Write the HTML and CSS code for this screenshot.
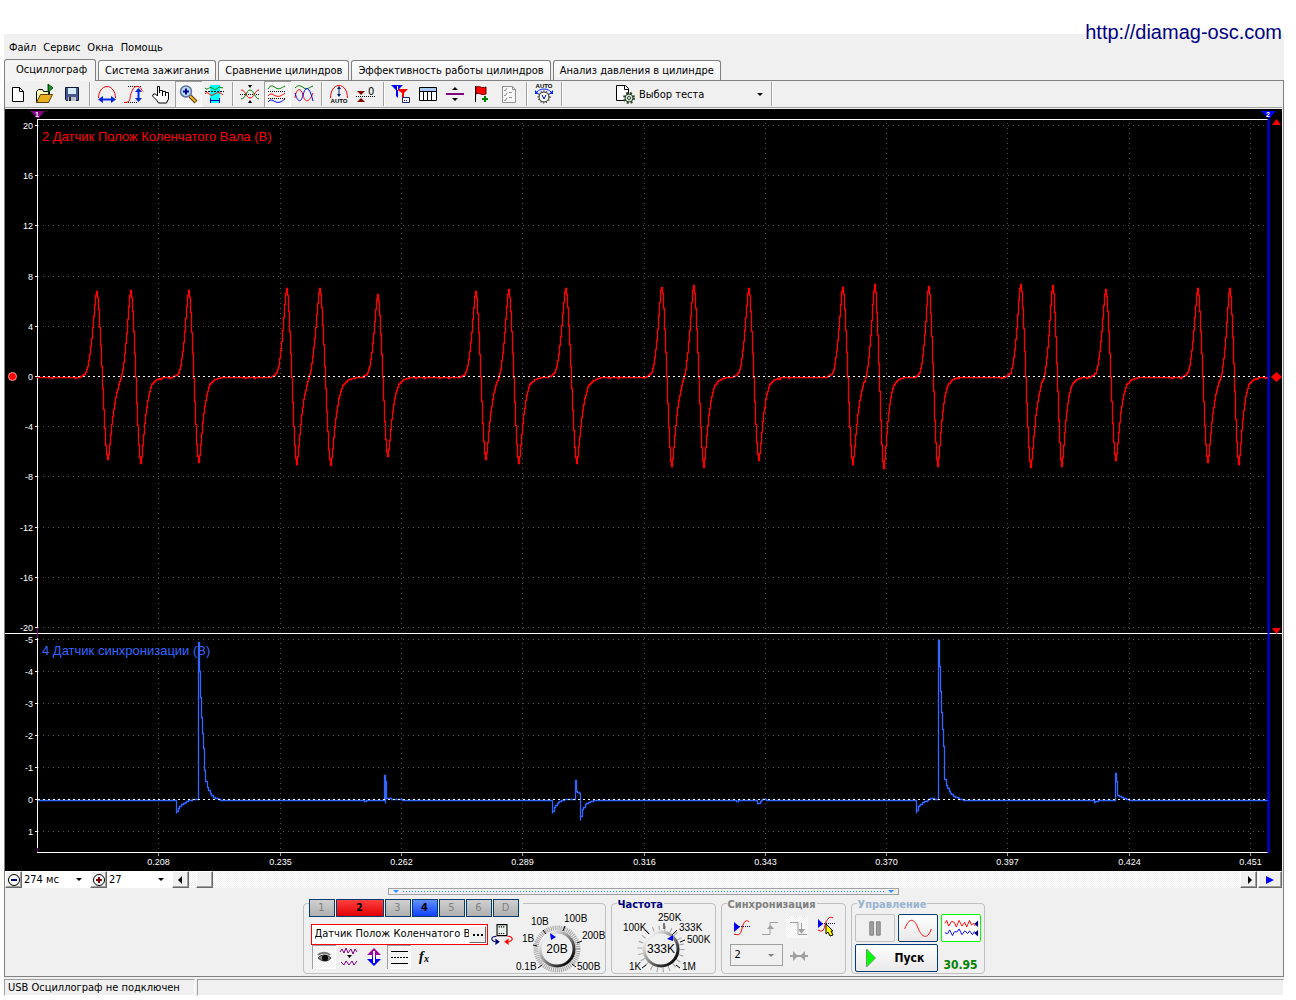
FILE: index.html
```html
<!DOCTYPE html>
<html lang="ru">
<head>
<meta charset="utf-8">
<title>Осциллограф</title>
<link rel="stylesheet" href="styles.css">
</head>
<body>
<header class="site"><a href="http://diamag-osc.com">http://diamag-osc.com</a></header>
<main class="app">
  <nav class="menu">
    <button>Файл</button><button>Сервис</button><button>Окна</button><button>Помощь</button>
  </nav>
  <div class="tabs" role="tablist">
    <button class="tab active" role="tab" aria-selected="true">Осциллограф</button>
    <button class="tab" role="tab">Система зажигания</button>
    <button class="tab" role="tab">Сравнение цилиндров</button>
    <button class="tab" role="tab">Эффективность работы цилиндров</button>
    <button class="tab" role="tab">Анализ давления в цилиндре</button>
  </div>
  <section class="sheet">
    <div class="toolbar">
      <button class="tool" aria-label="Новый"><svg viewBox="0 0 22 22"><path d="M5.500 4.500h7l4 4v10h-11z" fill="#fff" stroke="#000"/><path d="M12.500 4.500v4h4" fill="none" stroke="#000"/></svg></button>
      <button class="tool" aria-label="Открыть"><svg viewBox="0 0 22 22"><path d="M2.500 19.500v-11l2-2h4l1 2h6v3" fill="#ffffc0" stroke="#000"/><path d="M2.500 19.500l4-8h12l-4 8z" fill="#e8b020" stroke="#604000"/><path d="M14 1l5 4-5 4z" fill="#00a020" stroke="#006010"/><path d="M14.500 2v10" stroke="#004000"/></svg></button>
      <button class="tool" aria-label="Сохранить"><svg viewBox="0 0 22 22"><path d="M4.500 4.500h13v13h-12l-1-1z" fill="#485890" stroke="#101830"/><path d="M7 5h8v6H7z" fill="#d8ecff"/><path d="M7 14h8v4H7z" fill="#c0c0c8"/><path d="M8 14h2v4H8z" fill="#202840"/></svg></button>
      <i class="sep"></i>
      <button class="tool" aria-label="По горизонтали"><svg viewBox="0 0 22 22"><path d="M2.500 15C2.500 9 6 3.500 11 3.500S19.500 9 19.500 15" fill="none" stroke="#f00"/><path d="M4 16.500h14" stroke="#0028ff" stroke-width="2"/><path d="M7 13v7l-5-3.500zM15 13v7l5-3.500z" fill="#0028d0"/></svg></button>
      <button class="tool" aria-label="По вертикали"><svg viewBox="0 0 22 22"><path d="M5 3.500h14M3 19.500h12" stroke="#000" stroke-dasharray="1 1"/><path d="M1 19.500c8 0 5-4 7-9s3-7 6-7c4 0 4 3 6 5" fill="none" stroke="#f00"/><path d="M15.500 6v11" stroke="#0028ff" stroke-width="2"/><path d="M12 9h7l-3.500-4zM12 15h7l-3.500 4z" fill="#0028d0"/></svg></button>
      <button class="tool" aria-label="Рука"><svg viewBox="0 0 22 22"><path d="M7.500 13V3.500h2V10V7.500h3V10V8.500h3V11V9.500h3V16l-2 4h-8l-2-3-4-4 1-2h2z" fill="#fff" stroke="#000"/><path d="M12.500 9v4M15.500 10v3" stroke="#000"/></svg></button>
      <button class="tool on" aria-label="Увеличить"><svg viewBox="0 0 22 22"><path d="M13 13l6 6" stroke="#604010" stroke-width="4"/><path d="M13 13l5.500 5.500" stroke="#f0b020" stroke-width="2"/><circle cx="9" cy="8.500" r="5.500" fill="#b8e0ff" stroke="#6070a0" stroke-width="1.500"/><path d="M6 8.500h6M9 5.500v6" stroke="#0000a0" stroke-width="2"/></svg></button>
      <button class="tool" aria-label="Выделение"><svg viewBox="0 0 22 22"><path d="M6 2h10v18H6z" fill="#0ff"/><path d="M1 5c3 3 4-2 7 0s4 2 7-1l4 1" fill="none" stroke="#008000"/><path d="M1 8.500h19" stroke="#000" stroke-dasharray="2 1"/><path d="M1 11c3-4 5 3 8 1s6-4 10 0" fill="none" stroke="#f00"/><path d="M7 17.500h8" stroke="#0000c0"/><path d="M6.500 15v5M15.500 15v5" stroke="#0000c0"/></svg></button>
      <i class="sep"></i>
      <button class="tool" aria-label="Центр"><svg viewBox="0 0 22 22"><path d="M1 11.500h20" stroke="#000" stroke-dasharray="1 1"/><path d="M2 7c5 0 5 8 9 8s5-8 9-8" fill="none" stroke="#f00"/><path d="M2 16c5 0 5-9 9-9s5 9 9 9" fill="none" stroke="#008000"/><path d="M9 2h4l-2 3zM9 20h4l-2-3z"/></svg></button>
      <button class="tool on" aria-label="Раздельно"><svg viewBox="0 0 22 22"><path d="M2 6c3-5 5-3 8-1s5 0 9-2" fill="none" stroke="#008000"/><path d="M2 13c3-4 5-1 8 0s5 0 9-3" fill="none" stroke="#f00"/><path d="M2 19c3-4 5-1 8 0s5 0 9-3" fill="none" stroke="#00f"/><path d="M2 8.500h18M2 15.500h18" stroke="#000" stroke-dasharray="1 1"/></svg></button>
      <button class="tool" aria-label="Вместе"><svg viewBox="0 0 22 22"><path d="M2 5c4-4 6-2 9 0s6-1 9-2" fill="none" stroke="#008000"/><path d="M2 15C3 5 8 4 10 12s6 8 10-2" fill="none" stroke="#f00"/><path d="M2 10c3 10 6 10 8 2s6-11 10 6" fill="none" stroke="#00f"/></svg></button>
      <i class="sep"></i>
      <button class="tool" aria-label="Авто размах"><svg viewBox="0 0 22 22"><path d="M2.500 15C2.500 8 6 2.500 11 2.500S19.500 8 19.500 15" fill="none" stroke="#f00"/><path d="M11 4v9" stroke="#002080"/><path d="M9 6h4l-2-3zM9 11h4l-2 3z" fill="#002080"/><text x="11" y="20" text-anchor="middle" class="tiny">AUTO</text></svg></button>
      <button class="tool" aria-label="Ноль"><svg viewBox="0 0 22 22"><path d="M1 13.500h20" stroke="#000" stroke-dasharray="1 1"/><path d="M2 8h8l-4 4zM2 19h8l-4-4z" fill="#800000"/><text x="13" y="12" class="zero">0</text></svg></button>
      <i class="sep"></i>
      <button class="tool" aria-label="Фильтр"><svg viewBox="0 0 22 22"><path d="M6 6h12l-4 4v6l-2-1v-5z" fill="#f00"/><path d="M1 2h12l-5 5v8l-2-2V7z" fill="#00f"/><path d="M7.500 3v4" stroke="#fff"/><path d="M12.500 14.500h7v5h-7z" fill="#fff" stroke="#202060"/><path d="M14 17.500h4" stroke="#202060" stroke-dasharray="1 1"/></svg></button>
      <button class="tool" aria-label="Таблица"><svg viewBox="0 0 22 22"><path d="M2.500 4.500h17v13h-17z" fill="#fff" stroke="#000"/><path d="M3 5h16v3H3z" fill="#a8c8f8"/><path d="M3 8.500h16M6.500 8v9M10.500 8v9M14.500 8v9" stroke="#000"/></svg></button>
      <button class="tool" aria-label="Разделить"><svg viewBox="0 0 22 22"><path d="M2 11h18" stroke="#800080" stroke-width="2"/><path d="M8 7h6l-3-3zM8 15h6l-3 3z"/></svg></button>
      <button class="tool" aria-label="Метка"><svg viewBox="0 0 22 22"><path d="M4.500 3v16" stroke="#000"/><path d="M5 4c4-2 5 2 10 0v7c-5 2-6-2-10 0z" fill="#f00" stroke="#600"/><path d="M14 13v6M11 16h6" stroke="#008000" stroke-width="2"/></svg></button>
      <button class="tool" aria-label="Отчет"><svg viewBox="0 0 22 22"><path d="M4.500 3.500h10l3 3v13h-13z" fill="#f8f8f8" stroke="#909090"/><path d="M14.500 3.500v3h3M6 7l1 1 2-3M6 12l1 1 2-3M6 17l1 1 2-3M11 9.500h3M11 14.500h3" fill="none" stroke="#909090"/></svg></button>
      <i class="sep"></i>
      <button class="tool" aria-label="Авто настройка"><svg viewBox="0 0 22 22"><text x="11" y="5" text-anchor="middle" class="tiny">AUTO</text><path d="M4 9c3-4 11-4 14 0" fill="none" stroke="#0028ff"/><path d="M2 7v4h4zM20 7v4h-4z" fill="#0028ff"/><circle cx="11" cy="14" r="6" fill="none" stroke="#000" stroke-dasharray="1 2"/><circle cx="11" cy="14" r="5" fill="#fff" stroke="#202020"/><path d="M9 12l2 4 2-4" fill="none" stroke="#00f"/></svg></button>
      <i class="sep"></i>
      <button class="test"><svg viewBox="0 0 22 22"><path d="M2.500 2.500h9l3 3v12h-12z" fill="#fff" stroke="#000"/><path d="M10.500 2.500v4h4" fill="none" stroke="#000"/><circle cx="15" cy="15" r="4" fill="#d0e0d0" stroke="#304830"/><circle cx="15" cy="15" r="5" fill="none" stroke="#304830" stroke-width="2" stroke-dasharray="2 2"/><circle cx="15" cy="15" r="1.500" fill="#fff" stroke="#304830"/></svg><span>Выбор теста</span><i class="caret"></i></button>
      <i class="sep"></i>
    </div>
    <svg id="scope" class="scope" role="img" aria-label="Осциллограмма"></svg>
    <div class="scroll">
      <button class="raised" aria-label="Уменьшить"><svg viewBox="0 0 16 16"><circle cx="8" cy="8" r="5.500" fill="#fff" stroke="#000"/><path d="M5 8h6" stroke="#000080" stroke-width="2"/></svg></button>
      <label class="combo wide"><select aria-label="Развертка"><option>274 мс</option></select><i class="caret"></i></label>
      <button class="raised" aria-label="Увеличить"><svg viewBox="0 0 16 16"><circle cx="8" cy="8" r="5.500" fill="#fff" stroke="#000"/><path d="M5 8h6M8 5v6" stroke="#800000" stroke-width="2"/></svg></button>
      <label class="combo"><select aria-label="Масштаб"><option>27</option></select><i class="caret"></i></label>
      <button class="raised" aria-label="Влево"><svg viewBox="0 0 16 16"><path d="M9 4v8L5 8z"/></svg></button>
      <div class="track"><button class="raised" aria-label="Ползунок"></button></div>
      <button class="raised" aria-label="Вправо"><svg viewBox="0 0 16 16"><path d="M7 4v8l4-4z"/></svg></button>
      <button class="raised play" aria-label="Воспроизвести"><svg viewBox="0 0 16 16"><path d="M4 4v8l8-4z" fill="#00f"/></svg></button>
    </div>
    <div class="splitter"><i class="grip"></i><i class="dots"></i><i class="grip"></i></div>
    <div class="panel">
      <section class="group channels">
        <div class="left">
          <div class="nums">
            <button>1</button><button class="red">2</button><button>3</button><button class="blue">4</button><button>5</button><button>6</button><button>D</button>
          </div>
          <div class="name">
            <div class="field"><input value="Датчик Полож Коленчатого Вала" aria-label="Название канала"><button aria-label="Выбрать"><svg viewBox="0 0 13 14"><path d="M2 7h2v2H2zM6 7h2v2H6zM10 7h2v2h-2z"/></svg></button></div>
            <button class="plain" aria-label="Инверсия"><svg viewBox="0 0 20 20"><path d="M5.500 1.500h9v10h-9z" fill="#e8efe8" stroke="#000"/><path d="M7 3.500h6M7 9.500h6" stroke="#000" stroke-dasharray="1 1"/><path d="M5 12c-5 0-6 4-1 5" fill="none" stroke="#000080"/><path d="M4 14v6l4-3z" fill="#000080"/><path d="M15 12c5 0 6 4 1 5" fill="none" stroke="#f00"/><path d="M16 14v6l-4-3z" fill="#f00"/></svg></button>
          </div>
          <div class="opts">
            <button class="on" aria-label="Видимость"><svg viewBox="0 0 22 22"><path d="M5 12c3-4 9-4 13 0-3 4-9 4-13 0z" fill="#888" stroke="#333"/><path d="M5 9c3-3 9-3 12 0" fill="none" stroke="#777" stroke-width="2"/><circle cx="12" cy="12" r="3"/></svg></button>
            <button aria-label="Сжатие"><svg viewBox="0 0 22 22"><path d="M2 6l2-3 2 4 2-5 2 5 3-4 2 5 2-5 2 3" fill="none" stroke="#800080"/><path d="M9 9h5l-2.500 3z"/><path d="M3 16l3 3 2-4 3 4 3-4 2 4 3-4" fill="none" stroke="#800080"/></svg></button>
            <button aria-label="Сдвиг"><svg viewBox="0 0 22 22"><path d="M11 2l7 7h-5v2H9V9H4z" fill="#a000a0"/><path d="M11 20l7-7h-5v-2H9v2H4z" fill="#00f"/><path d="M11 5v12" stroke="#fff" stroke-width="2"/></svg></button>
            <button class="on" aria-label="Уровни"><svg viewBox="0 0 22 22"><path d="M3 5.500h17M3 17.500h17" stroke="#000"/><path d="M3 11.500h17" stroke="#000" stroke-dasharray="2 1"/></svg></button>
            <button aria-label="Функция"><svg viewBox="0 0 22 22"><text x="6" y="15" class="fx">f</text><text x="11" y="16" class="fxs">x</text></svg></button>
          </div>
        </div>
        <svg class="dial" viewBox="0 0 90 70" role="img" aria-label="Диапазон 20В">
          <defs><linearGradient id="rim" x1="0" y1="0" x2="1" y2="1"><stop offset=".1" stop-color="#fff"/><stop offset=".5" stop-color="#888"/><stop offset=".85" stop-color="#101010"/></linearGradient></defs>
          <circle cx="44" cy="45" r="21" class="ring" stroke-dasharray="1 1"/>
          <path d="M29 61l-4 3M24 42l-4-1M33 30l-3-4M50 27l2-5M64 39l5-2M59 60l4 3" stroke="#000"/>
          <circle cx="44" cy="45" r="17" class="knob"/>
          <path d="M37 29l6 4-5 3z" fill="#00f"/>
          <text x="44" y="49" text-anchor="middle" class="val">20В</text>
          <g class="marks"><text x="3" y="66">0.1В</text><text x="9" y="38">1В</text><text x="18" y="21">10В</text><text x="51" y="18">100В</text><text x="69" y="35">200В</text><text x="64" y="66">500В</text></g>
        </svg>
      </section>
      <section class="group freq"><h2>Частота</h2>
        <svg class="dial" viewBox="0 0 90 70" role="img" aria-label="Частота 333K">
          <circle cx="44" cy="45" r="21" class="ring" stroke-dasharray="1 5"/>
          <path d="M29 61l-4 3M32 30l-4-4M47 25v-6M55 31l5-5M63 38l5-2M59 61l4 3" stroke="#000"/>
          <circle cx="44" cy="45" r="17" class="knob"/>
          <path d="M56 31v6l-6-2z" fill="#00f"/>
          <text x="44" y="49" text-anchor="middle" class="val">333K</text>
          <g class="marks"><text x="12" y="66">1K</text><text x="6" y="27">100K</text><text x="41" y="17">250K</text><text x="62" y="27">333K</text><text x="70" y="39">500K</text><text x="65" y="66">1M</text></g>
        </svg>
      </section>
      <section class="group sync"><h2>Синхронизация</h2>
        <div class="row">
          <button class="plain" aria-label="Уровень"><svg viewBox="0 0 22 22"><path d="M4 6v10l6-5z" fill="#00f"/><path d="M5 10.500h16" stroke="#000080" stroke-dasharray="1 1"/><path d="M4 18c8 3 7-4 9-9s4-5 6-3" fill="none" stroke="#f00"/></svg></button>
          <button class="plain" aria-label="По фронту"><svg viewBox="0 0 22 22"><path d="M4 18.500h8v-12h8" fill="none" stroke="#a0a0a0"/><path d="M9 13h7l-3.500-4z" fill="#a0a0a0"/></svg></button>
          <button class="plain hatch" aria-label="По спаду"><svg viewBox="0 0 22 22"><path d="M4 6.500h8v12h9" fill="none" stroke="#a0a0a0"/><path d="M15.500 7v10" stroke="#a0a0a0"/><path d="M12 13h7l-3.500 5z" fill="#a0a0a0"/></svg></button>
          <button class="plain" aria-label="Курсор"><svg viewBox="0 0 22 22"><path d="M4 3v9l5-4z" fill="#00f"/><path d="M4 7.500h18" stroke="#000080" stroke-dasharray="1 1"/><path d="M4 14c7 4 6-4 8-8s4-6 7-4" fill="none" stroke="#f00"/><path d="M12 8l7 7h-2l2 4-3 1-2-4-2 2z" fill="#ff0" stroke="#000"/></svg></button>
        </div>
        <div class="row">
          <label class="combo flat"><select aria-label="Канал синхронизации"><option>2</option></select><i class="caret"></i></label>
          <button class="plain" aria-label="Сжать"><svg viewBox="0 0 22 22"><path d="M1 12h18" stroke="#a0a0a0" stroke-width="2"/><path d="M4 7v10l5-5zM16 7v10l-5-5z" fill="#a0a0a0"/></svg></button>
        </div>
      </section>
      <section class="group run"><h2>Управление</h2>
        <div class="grid">
          <button class="box" aria-label="Пауза"><svg viewBox="0 0 40 26"><path d="M14.500 6.500h4v14h-4zM21.500 6.500h4v14h-4z" fill="#a0a0a0" stroke="#808080"/></svg></button>
          <button class="box navy" aria-label="Синус"><svg viewBox="0 0 40 26"><path d="M6 14C11 1 16 3 20 13s10 13 14 1" fill="none" stroke="#f00"/></svg></button>
          <button class="box lime" aria-label="Непрерывно"><svg viewBox="0 0 40 26"><path d="M3 8l2-3 2 6 3-5 3 1 2 5 3-7 3 6 3-4 2 5 3-7 2 5 2-2 2 3" fill="none" stroke="#f00"/><path d="M3 18l3 1 2-4 3 6 2-4 3 0 2-3 3 6 3-4 3 3 2-3 3 4 2-3 2 1" fill="none" stroke="#00f"/><path d="M38 5v7l-4-3.500zM38 15v7l-4-3.500z" fill="#000080"/></svg></button>
          <button class="box navy start"><svg viewBox="0 0 12 20"><path d="M1.500 1v18l9-9z" fill="#0f0" stroke="#60a060"/></svg><span>Пуск</span></button>
          <output>30.95</output>
        </div>
      </section>
    </div>
  </section>
  <footer class="status"><span>USB Осциллограф не подключен</span><span></span></footer>
</main>
<script src="scope.js"></script>
</body>
</html>
```
FILE: styles.css
```css
* { box-sizing: border-box; }
body { margin: 0; background: #fff; color: #000; font: 11px/14px "DejaVu Sans Condensed", "DejaVu Sans", sans-serif; }
button, input, select { font: inherit; color: inherit; margin: 0; padding: 0; border: 0; background: none; border-radius: 0; }
button { cursor: default; }
svg { display: block; }
i { font-style: normal; }

.site { height: 34px; padding: 20px 14px 0 0; text-align: right; font: 20px/24px "Liberation Sans", Arial, sans-serif; position: relative; }
.site a { color: #000080; text-decoration: none; }
.app { margin: 0 12px 0 4px; background: #f0f0f0; }
.menu { height: 25px; display: flex; gap: 7px; padding: 2px 5px 0; }
.tabs { display: flex; align-items: flex-end; gap: 2px; height: 21px; }
.tab { height: 20px; padding: 1px 6px 0; border: 1px solid #808080; border-bottom: 0; border-radius: 3px 3px 0 0; background: linear-gradient(#fff, #f0f0f0); white-space: nowrap; }
.tab.active { height: 22px; padding: 0 8px 1px 11px; margin-bottom: -1px; background: #f4f4f4; z-index: 1; }
.sheet { border: 1px solid #808080; padding-right: 1px; background: #f0f0f0; }

.toolbar { display: flex; align-items: center; height: 27px; border-bottom: 1px solid #a0a0a0; margin-bottom: 1px; }
.tool { flex: none; width: 27px; height: 26px; padding-right: 1px; display: grid; place-items: center; }
.tool svg, .test svg { width: 22px; height: 22px; }
.on, .hatch, .track { background: repeating-conic-gradient(#fff 0 25%, #f0f0f0 0 50%) 0 0 / 2px 2px; }
.on { box-shadow: inset 1px 1px #a0a0a0, inset -1px -1px #fff; }
.sep { flex: none; width: 8px; height: 24px; background: linear-gradient(90deg, transparent 3px, #a0a0a0 3px 4px, #fff 4px 5px, transparent 5px); }
.tiny { font: bold 6px "Liberation Sans", sans-serif; }
.zero { font: 11px "DejaVu Sans Condensed", sans-serif; }
.test { display: flex; align-items: center; gap: 3px; width: 154px; margin-left: 48px; padding-right: 5px; }
.test span { padding-top: 2px; }
.caret { width: 0; height: 0; border: 3px solid transparent; border-top-color: #000; border-bottom: 0; }
.test .caret { margin-left: auto; }

.scope { width: 100%; height: 762px; background: #000; }
.scope text { font: 9px "Liberation Sans", Arial, sans-serif; fill: #fff; }
.scope .title { font-size: 13px; }
.scope .red { fill: #f00; }
.scope .blue { fill: #36f; }
.scope .flag { font-weight: bold; font-size: 7px; }

.scroll { display: flex; height: 17px; }
.raised { flex: none; width: 17px; height: 17px; display: grid; place-items: center; background: #f0f0f0; border: 1px solid; border-color: #fff #696969 #696969 #fff; box-shadow: inset -1px -1px #a0a0a0; }
.raised svg { width: 16px; height: 16px; }
.play { width: 24px; margin-left: 1px; }
.combo { flex: none; display: grid; grid-template-columns: 1fr 14px; align-items: center; width: 65px; background: #fff; }
.combo.wide { width: 68px; }
.combo select { grid-area: 1 / 1 / 2 / 3; width: 100%; height: 17px; padding: 0 2px; appearance: none; font-size: 11px; }
.combo .caret { grid-area: 1 / 2; pointer-events: none; }
.track { flex: 1; padding-left: 7px; }

.splitter { display: flex; align-items: center; gap: 4px; width: 40%; height: 7px; margin: 0 auto; padding: 0 4px; border: 1px solid #a0a0a0; }
.grip { border: 3px solid transparent; border-top-color: #3090ff; border-bottom: 0; }
.dots { flex: 1; height: 1px; background: repeating-linear-gradient(90deg, #3090ff 0 1px, transparent 1px 3px); }

.panel { display: flex; justify-content: center; gap: 5px; padding: 8px 0 2px; }
.group { height: 71px; border: 1px solid #c0c0c0; border-radius: 4px; }
.group h2 { width: max-content; margin: -5px 0 0 5px; padding: 0 1px; font: bold 11px/12px "DejaVu Sans Condensed", "DejaVu Sans", sans-serif; background: #f0f0f0; color: #000080; }
.channels { display: flex; width: 303px; }
.left { width: 216px; padding: 0 0 0 5px; }
.nums { display: flex; gap: 1px; width: max-content; margin-top: -5px; padding-right: 4px; background: #f0f0f0; }
.nums button { width: 26px; height: 18px; border: 1px solid #003c74; background: linear-gradient(#d0d0d0, #b0b0b0); color: #808080; line-height: 14px; }
.nums .red { width: 48px; background: linear-gradient(#ff4040, #e00000); color: #000; font-weight: bold; }
.nums .blue { background: linear-gradient(#6090ff, #1040ff); color: #000; font-weight: bold; }
.name { display: flex; align-items: center; gap: 3px; padding: 6px 0 0 2px; }
.field { display: flex; width: 177px; height: 21px; padding: 1px; border: 1px solid #f00; background: #fff; }
.field input { flex: 1; min-width: 0; padding-left: 2px; outline: 0; }
.field button { width: 17px; background: #f0f0f0; border: 1px solid; border-color: #fff #696969 #696969 #fff; display: grid; place-items: center; }
.field svg { width: 13px; height: 14px; }
.plain { display: grid; place-items: center; }
.plain svg { width: 22px; height: 22px; }
.opts { display: flex; padding-left: 3px; gap: 1px; }
.opts button { width: 24px; height: 24px; display: grid; place-items: center; }
.opts svg { width: 22px; height: 22px; }
.fx { font: italic bold 14px "Liberation Serif", serif; }
.fxs { font: italic bold 10px "Liberation Serif", serif; }

.dial { width: 90px; height: 70px; overflow: visible; font: 10px "Liberation Sans", Arial, sans-serif; }
.channels .dial { margin-left: -7px; }
.ring { fill: none; stroke: #a0a0a0; stroke-width: 5px; }
.knob { fill: #f0f0f0; stroke: url(#rim); stroke-width: 3px; }
.val { font: 12px "Liberation Sans", Arial, sans-serif; }

.freq { width: 105px; }
.freq .dial { margin-top: -7px; margin-left: 5px; }
.sync { width: 125px; }
.sync h2 { color: #808080; }
.sync .row { display: flex; gap: 6px; padding: 5px 8px 0; }
.sync .row + .row { padding-top: 6px; }
.combo.flat { width: 53px; height: 22px; border: 1px solid #a0a0a0; background: #f0f0f0; }
.combo.flat select { padding-left: 4px; }
.combo.flat .caret { border-top-color: #808080; }
.run { width: 134px; }
.run h2 { color: #99b4d1; }
.grid { display: grid; grid-template-columns: repeat(3, 40px); gap: 2px 3px; padding: 3px; }
.box { height: 28px; border: 1px solid #c0c0c0; border-radius: 2px; background: #f0f0f0; }
.box svg { width: 38px; height: 26px; }
.navy { border-color: #003c74; background: linear-gradient(#fff, #e8e8e8); }
.lime { border: 1px solid #0f0; background: #fff; }
.start { grid-column: span 2; display: flex; align-items: center; gap: 18px; padding-left: 9px; font-weight: bold; font-size: 12px; }
.start svg { width: 12px; height: 20px; }
.run output { align-self: end; justify-self: center; font-weight: bold; font-size: 12px; color: #008000; }

.status { display: flex; gap: 2px; height: 19px; padding-top: 2px; line-height: 15px; }
.status span { border: 1px solid; border-color: #a0a0a0 #fff #fff #a0a0a0; padding-left: 3px; }
.status span:first-child { width: 191px; }
.status span:last-child { flex: 1; }
```
FILE: scope.js
```js
const svg = document.getElementById('scope');
const NS = 'http://www.w3.org/2000/svg';
const LEFT = 33, RIGHT = 14, SPAN = 1230;

// Crankshaft pulses: peak position, peak height, trough position, trough depth
const pulses = [
  [59, 86, 70, 83], [93, 88, 103, 87], [151, 87, 161, 86], [249, 89, 259, 88], [282, 89, 293, 88],
  [340, 83, 350, 80], [438, 86, 448, 83], [471, 88, 481, 87], [528, 89, 539, 86], [624, 92, 634, 90],
  [656, 93, 666, 90], [711, 89, 721, 84], [805, 91, 815, 88], [837, 94, 846, 92], [891, 92, 900, 90],
  [983, 94, 993, 91], [1015, 93, 1024, 90], [1068, 88, 1078, 84], [1160, 89, 1170, 86], [1192, 90, 1201, 88]
];
const shape = [[-22, 0], [-18, .02], [-15.500, .05], [-13.500, .12], [-11.500, .27], [-9.500, .48], [-7.500, .77], [-6.200, .94],
  [-5.200, 1], [-4.300, .95], [-3.300, .8], [-1.500, .4], [0, 0], [1.800, -.5], [3.500, -.87], [5, -1], [5.800, -.94], [7, -.8],
  [8.700, -.58], [10.300, -.41], [12.700, -.23], [16, -.09], [21, -.03], [28, 0]];
// Sync sensor: x offset, level in pixels below the zero line
const sync = [[0, 1], [138, 1], [138, 14], [140, 10], [143, 6], [147, 3], [152, 1], [156, 0], [160, 0], [160, -157], [161, -128],
  [162, -102], [163, -82], [164, -66], [165, -51], [166, -29], [167, -22], [169, -14], [172, -7], [175, -3], [180, 0], [186, 1],
  [325, 1], [326, 2], [330, 1], [346, 1], [346, -24], [347, 4], [347, -18], [348, -1], [360, 0], [370, 1], [514, 1], [514, 14],
  [516, 9], [519, 5], [523, 1], [530, 0], [537, 0], [537, -19], [538, -9], [541, -6], [542, -4], [542, 21], [544, 12], [547, 6],
  [552, 2], [558, 1], [697, 1], [698, 2], [700, 1], [718, 1], [719, 5], [722, 3], [726, -1], [730, 1], [878, 1], [878, 14],
  [880, 8], [884, 4], [889, 1], [894, -1], [900, 0], [900, -159], [901, -133], [902, -108], [903, -87], [904, -70], [905, -53],
  [906, -24], [908, -16], [911, -9], [915, -4], [920, -1], [927, 1], [1055, 1], [1056, 3], [1060, 1], [1077, 1], [1077, -26],
  [1078, -18], [1079, -5], [1083, -3], [1088, 0], [1096, 1], [1230, 1]];

function add(name, attrs, text) {
  const el = document.createElementNS(NS, name);
  for (const key in attrs) el.setAttribute(key, attrs[key]);
  if (text !== undefined) el.textContent = text;
  svg.appendChild(el);
}
function line(x1, y1, x2, y2, stroke, dash) {
  add('path', { d: `M${x1} ${y1}L${x2} ${y2}`, stroke, fill: 'none', 'shape-rendering': 'crispEdges', 'stroke-dasharray': dash || 'none' });
}
function sample(d) {
  if (d <= shape[0][0] || d >= shape[shape.length - 1][0]) return 0;
  let i = 1;
  while (shape[i][0] < d) i++;
  const [a, u] = shape[i - 1], [b, v] = shape[i];
  return u + (v - u) * (d - a) / (b - a);
}
// Stepped trace: one column per screen pixel
function trace(points, stroke) {
  let d = '';
  points.forEach(([x, y], i) => {
    const sx = Math.floor(x) - .5, sy = Math.round(y) + .5;
    d += i ? `H${sx}V${sy}` : `M${sx} ${sy}`;
  });
  add('path', { d, stroke, fill: 'none', 'stroke-width': 1.300, 'stroke-linecap': 'square' });
}
function draw() {
  svg.replaceChildren();
  const width = svg.clientWidth, end = width - RIGHT, k = (end - LEFT) / SPAN;
  const px = x => LEFT + x * k;

  for (let i = 0; i <= 10; i++) {
    const y = Math.round(16 + i * 50.200) + .5;
    line(LEFT, y, end, y, '#505050', '1 4');
    line(LEFT - 3, y, LEFT, y, '#fff');
    add('text', { x: LEFT - 5, y: y + 3, 'text-anchor': 'end' }, 20 - i * 4);
  }
  for (let i = 0; i < 7; i++) {
    const y = 530.500 + i * 32;
    line(LEFT, y, end, y, '#505050', '1 4');
    line(LEFT - 3, y, LEFT, y, '#fff');
    add('text', { x: LEFT - 5, y: y + 3, 'text-anchor': 'end' }, i - 5);
  }
  for (let i = 0; i < 10; i++) {
    const x = Math.round(px(120.300 + i * 121.300)) + .5;
    line(x, 14, x, 743, '#505050', '1 4');
    line(x, 744, x, 747, '#a0a0a0');
    add('text', { x, y: 756, 'text-anchor': 'middle' }, (.208 + i * .027).toFixed(3));
  }
  line(LEFT, 10.500, end, 10.500, '#fff');
  line(0, 524.500, width, 524.500, '#fff');
  line(LEFT, 743.500, end, 743.500, '#fff');
  line(LEFT - .5, 10, LEFT - .5, 744, '#fff');
  line(LEFT - .5, 519, LEFT - .5, 529, '#800080');
  line(LEFT - .5, 739, LEFT - .5, 743, '#800080');

  const crank = [];
  for (let x = 0; x <= SPAN; x++) {
    let y = 268 + (Math.sin(x * 1.700) * Math.sin(x * .370) > .85 ? 1 : 0);
    for (const [p, up, t, down] of pulses) {
      const s = sample((x - (p + t) / 2) * 10.200 / (t - p));
      y -= s > 0 ? s * up : s * down;
    }
    crank.push([px(x), y]);
  }
  const cam = [];
  sync.forEach(([x, y], i) => {
    if (i) {
      const [a, b] = sync[i - 1];
      for (let t = a + 1; t < x; t++) cam.push([px(t), 690 + b + (y - b) * (t - a) / (x - a)]);
    }
    cam.push([px(x) + 1, 690 + y]);
  });
  add('text', { x: LEFT + 4, y: 32, class: 'title red' }, '2 Датчик Полож Коленчатого Вала (В)');
  add('text', { x: LEFT + 4, y: 546, class: 'title blue' }, '4 Датчик синхронизации (В)');
  trace(crank, '#f00');
  trace(cam, '#36f');
  line(LEFT, 267.500, end, 267.500, '#fff', '2 3');
  line(LEFT, 690.500, end, 690.500, '#fff', '2 3');

  add('path', { d: `M${end + .5} 10V744`, stroke: '#00f', 'stroke-width': 2 });
  add('path', { d: `M${LEFT - 8} 2h15l-7 8z`, fill: '#800080' });
  add('text', { x: LEFT - 1, y: 8, class: 'flag', 'text-anchor': 'middle' }, '1');
  add('path', { d: `M${end - 7} 2h15l-7 8z`, fill: '#00f' });
  add('text', { x: end, y: 8, class: 'flag', 'text-anchor': 'middle' }, '2');
  add('path', { d: `M${end + 4} 16h9l-4.500-6zM${end + 4} 519h9l-4.500 6z`, fill: '#f00' });
  add('path', { d: `M${end + 3} 268l5.500-5 5.500 5-5.500 5z`, fill: '#f00' });
  add('circle', { cx: 7.500, cy: 267.500, r: 4, fill: '#f00', stroke: '#f99' });
}
draw();
window.addEventListener('resize', draw);
```
